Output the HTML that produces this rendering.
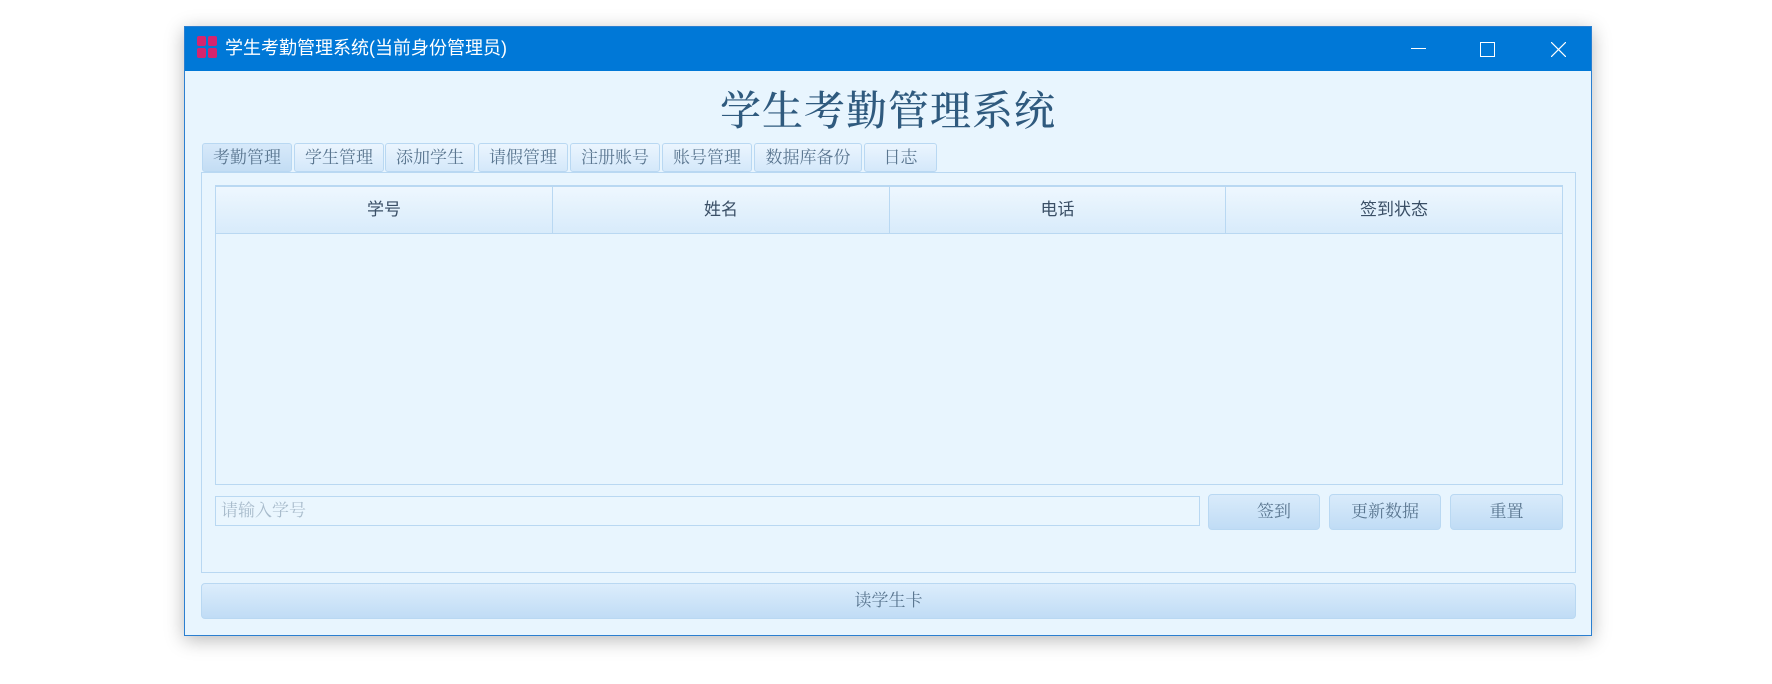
<!DOCTYPE html>
<html><head><meta charset="utf-8"><style>
*{margin:0;padding:0;box-sizing:border-box}
body{width:1772px;height:684px;background:#fff;position:relative;overflow:hidden;font-family:"Liberation Sans","Noto Sans CJK SC",sans-serif}
.win{position:absolute;left:184px;top:26px;width:1408px;height:610px;background:#e8f5fe;border:1px solid #2b7fd0;box-shadow:0 4px 18px rgba(0,0,0,.28)}
.tb{position:absolute;left:0;top:0;width:100%;height:44px;background:#0078d7;color:#fff}
.a{position:absolute}
.serif{font-family:"Liberation Serif","Noto Serif CJK SC",serif}
.tab{position:absolute;top:116px;height:29px;border:1px solid #b9d8f2;border-radius:3px;background:linear-gradient(#ebf5fe,#d4e8fa);color:#5a7690;font-size:17px;text-align:center;line-height:27px}
.btn{position:absolute;border:1px solid #b9d8f2;border-radius:4px;background:linear-gradient(#d9ebfb,#c0dcf5);color:#5a7690;font-size:17px;text-align:center}
.th{position:absolute;top:0;height:46px;border-right:1px solid #b9d8f2;background:linear-gradient(#eef7fe,#d8ebfb);text-align:center;line-height:46px;font-size:17px;color:#3a4f66}
</style></head><body>
<div class="win">
 <div class="tb">
  <svg class="a" style="left:12px;top:9px" width="22" height="24"><rect x="0" y="0" width="9" height="10" rx="2" fill="#d6246e"/><rect x="11" y="0" width="9" height="10" rx="2" fill="#d6246e"/><rect x="0" y="12" width="9" height="10" rx="2" fill="#d6246e"/><rect x="11" y="12" width="9" height="10" rx="2" fill="#d6246e"/></svg>
  <div class="a" style="left:40px;top:9px;font-size:18px;line-height:24px">学生考勤管理系统(当前身份管理员)</div>
  <div class="a" style="left:1226px;top:21px;width:15px;height:1px;background:#fff"></div>
  <div class="a" style="left:1295px;top:15px;width:15px;height:15px;border:1px solid #fff"></div>
  <svg class="a" style="left:1366px;top:15px" width="15" height="15"><path d="M0 0L15 15M15 0L0 15" stroke="#fff" stroke-width="1.2"/></svg>
 </div>
 <div class="a serif" style="left:0;width:100%;top:58px;text-align:center;font-size:41px;line-height:52px;color:#2f5a7e;font-weight:500;letter-spacing:1px">学生考勤管理系统</div>
 <div class="tab serif" style="left:17px;width:90px;background:linear-gradient(#d7e9fa,#c3ddf4)">考勤管理</div>
 <div class="tab serif" style="left:109px;width:90px">学生管理</div>
 <div class="tab serif" style="left:200px;width:90px">添加学生</div>
 <div class="tab serif" style="left:293px;width:90px">请假管理</div>
 <div class="tab serif" style="left:385px;width:90px">注册账号</div>
 <div class="tab serif" style="left:477px;width:90px">账号管理</div>
 <div class="tab serif" style="left:569px;width:108px">数据库备份</div>
 <div class="tab serif" style="left:679px;width:73px">日志</div>
 <div class="a" style="left:16px;top:145px;width:1375px;height:401px;border:1px solid #b9d8f2"></div>
 <div class="a" style="left:30px;top:158px;width:1348px;height:300px;border:1px solid #b9d8f2;border-top:2px solid #b9d8f2">
  <div class="th" style="left:0;width:337px">学号</div>
  <div class="th" style="left:337px;width:337px">姓名</div>
  <div class="th" style="left:674px;width:336px">电话</div>
  <div class="th" style="left:1010px;width:336px;border-right:none">签到状态</div>
  <div class="a" style="left:0;top:46px;width:100%;height:1px;background:#b9d8f2"></div>
 </div>
 <div class="a serif" style="left:30px;top:469px;width:985px;height:30px;border:1px solid #b9d8f2;background:#eaf6fe;color:#a9bccc;font-size:17px;line-height:28px;padding-left:5px">请输入学号</div>
 <div class="btn serif" style="left:1023px;top:467px;width:112px;height:36px;line-height:34px;padding-left:20px">签到</div>
 <div class="btn serif" style="left:1144px;top:467px;width:112px;height:36px;line-height:34px">更新数据</div>
 <div class="btn serif" style="left:1265px;top:467px;width:113px;height:36px;line-height:34px">重置</div>
 <div class="btn serif" style="left:16px;top:556px;width:1375px;height:36px;line-height:34px;background:linear-gradient(#dcedfc,#c0dcf5)">读学生卡</div>
</div>
</body></html>
